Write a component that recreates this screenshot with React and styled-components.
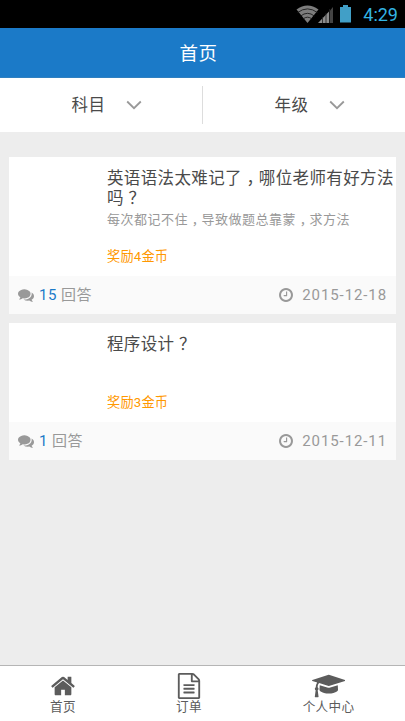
import React from "react";
import styled, { createGlobalStyle } from "styled-components";

const GlobalStyle = createGlobalStyle`
  * { box-sizing: border-box; }
  body {
    margin: 0;
    background: #ededed;
    font-family: Roboto, "Noto Sans CJK SC", sans-serif;
  }
`;

const Screen = styled.div`
  display: flex;
  flex-direction: column;
  width: 405px;
  height: 721px;
  overflow: hidden;
  background: #ededed;
`;

const StatusBar = styled.div`
  display: flex;
  flex: none;
  align-items: center;
  justify-content: flex-end;
  height: 28px;
  padding-right: 7px;
  background: #000;
`;

const StatusIcons = styled.svg`
  display: block;
  width: 56px;
  height: 28px;
  margin-right: 11px;
`;

const Clock = styled.span`
  color: #33b5e5;
  font-size: 18px;
  line-height: 28px;
  padding-top: 2px;
`;

const TitleBar = styled.header`
  flex: none;
  height: 50px;
  padding: 1px 8px 0 0;
  background: #1b7ac8;
  border-bottom: 1px solid #3080c0;
  color: #fff;
  font-size: 18.5px;
  line-height: 50px;
  letter-spacing: 0.5px;
  text-align: center;
`;

const Filters = styled.div`
  display: grid;
  flex: none;
  grid-template-columns: 203px 202px;
  align-items: center;
  height: 54px;
  background: #fff;
`;

const Filter = styled.div`
  display: flex;
  align-items: center;
  height: 38px;
  padding: 0 0 2px 71.5px;
  border-right: ${(p) => (p.$divided ? "1px solid #ddd" : "none")};
  color: #4a4a4a;
  font-size: 16.5px;
  letter-spacing: 0.4px;
`;

const Chevron = styled.svg`
  width: 16px;
  height: 10px;
  margin: 2px 0 0 20.5px;
  fill: none;
  stroke: #999;
  stroke-width: 1.8;
`;

const List = styled.main`
  display: flex;
  flex: 1;
  flex-direction: column;
  gap: 9px;
  padding: 24.5px 9px 0;
`;

const Card = styled.article`
  background: #fff;
`;

const CardBody = styled.div`
  display: flex;
  flex-direction: column;
  height: ${(p) => p.$height}px;
  padding: 12px 0 0 98px;
  white-space: nowrap;
`;

const Question = styled.h2`
  margin: 0;
  color: #4a4a4a;
  font-size: 16.5px;
  font-weight: 400;
  line-height: 20.5px;
  letter-spacing: 0.37px;
`;

const Detail = styled.p`
  margin: 0;
  color: #999;
  font-size: 13px;
  line-height: 20px;
  letter-spacing: 0.5px;
`;

/* Half-width punctuation, centred in a full-width cell. */
const Mark = styled.span`
  margin: 0 0.22em 0 0.28em;
  font-feature-settings: "halt";
`;

const Reward = styled.div`
  margin-top: auto;
  padding-bottom: 9px;
  color: #ff9800;
  font-size: 13.2px;
  line-height: 20px;
  letter-spacing: 0.2px;
`;

const CardFooter = styled.footer`
  display: flex;
  align-items: center;
  justify-content: space-between;
  height: 38px;
  padding: 0 9px;
  background: #fafafa;
  color: #999;
  font-size: 15px;
  letter-spacing: 0.9px;
`;

const Meta = styled.div`
  display: flex;
  align-items: center;
  gap: ${(p) => p.$gap}px;
`;

const Answers = styled.span`
  padding-bottom: 3px;
  letter-spacing: 0.45px;
`;

const Count = styled.span`
  color: #1b7ac8;
`;

const Icon = styled.svg`
  display: block;
  flex: none;
  width: ${(p) => p.$w}px;
  height: ${(p) => p.$h}px;
  fill: currentColor;
`;

const TabBar = styled.nav`
  display: grid;
  flex: none;
  grid-template-columns: 126px 126px 153px;
  height: 56px;
  background: #fff;
  border-top: 1px solid #b5b5b5;
`;

const Tab = styled.div`
  display: flex;
  flex-direction: column;
  align-items: center;
  color: #5c5c5c;
  font-size: 12.6px;
  line-height: 16px;
  letter-spacing: 0.3px;
`;

const TabIcon = styled.div`
  display: flex;
  align-items: center;
  justify-content: center;
  height: 40px;
  margin-bottom: -7px;
`;

const icons = {
  comments: {
    box: "0 0 1792 1792",
    d: "M1408 768q0 139-94 257t-256.5 186.5-353.5 68.5q-86 0-176-16-124 88-278 128-36 9-86 16h-3q-11 0-20.5-8t-11.5-21q-1-3-1-6.5t.5-6.5 2-6l2.5-5 3.5-5.5 4-5 4.5-5 4-4.5q5-6 23-25t26-29.5 22.5-29 25-38.5 20.5-44q-124-72-195-177t-71-224q0-139 94-257t256.5-186.5 353.5-68.5 353.5 68.5 256.5 186.5 94 257zm384 256q0 120-71 224.5t-195 176.5q10 24 20.5 44t25 38.5 22.5 29 26 29.5 23 25q1 1 4 4.5t4.5 5 4 5 3.5 5.5l2.5 5 2 6 .5 6.5-1 6.5q-3 14-13 22t-22 7q-50-7-86-16-154-40-278-128-90 16-176 16-271 0-472-132 58 4 88 4 161 0 309-45t264-129q125-92 192-212t67-254q0-77-23-152 129 71 204 178t75 230z",
  },
  clock: {
    box: "128 128 1536 1536",
    d: "M1024 544v448q0 14-9 23t-23 9h-320q-14 0-23-9t-9-23v-64q0-14 9-23t23-9h224v-352q0-14 9-23t23-9h64q14 0 23 9t9 23zm416 352q0-148-73-273t-198-198-273-73-273 73-198 198-73 273 73 273 198 198 273 73 273-73 198-198 73-273zm224 0q0 209-103 385.5t-279.5 279.5-385.5 103-385.5-103-279.5-279.5-103-385.5 103-385.5 279.5-279.5 385.5-103 385.5 103 279.5 279.5 103 385.5z",
  },
  home: {
    box: "0 0 1792 1792",
    d: "M1472 992v480q0 26-19 45t-45 19h-384v-384h-256v384h-384q-26 0-45-19t-19-45v-480q0-1 .5-3t.5-3l575-474 575 474q1 2 1 6zm223-69l-62 74q-8 9-21 11h-3q-13 0-21-7l-692-577-692 577q-12 8-24 7-13-2-21-11l-62-74q-8-10-7-23.5t11-21.5l719-599q32-26 76-26t76 26l244 204v-195q0-14 9-23t23-9h192q14 0 23 9t9 23v408l219 182q10 8 11 21.5t-7 23.5z",
  },
  file: {
    box: "0 0 1792 1792",
    d: "M1596 380q28 28 48 76t20 88v1152q0 40-28 68t-68 28h-1344q-40 0-68-28t-28-68v-1600q0-40 28-68t68-28h896q40 0 88 20t76 48zm-444-244v376h376q-10-29-22-41l-313-313q-12-12-41-22zm384 1528v-1024h-416q-40 0-68-28t-28-68v-416h-768v1536h1280zm-1024-864q0-14 9-23t23-9h704q14 0 23 9t9 23v64q0 14-9 23t-23 9h-704q-14 0-23-9t-9-23v-64zm736 224q14 0 23 9t9 23v64q0 14-9 23t-23 9h-704q-14 0-23-9t-9-23v-64q0-14 9-23t23-9h704zm0 256q14 0 23 9t9 23v64q0 14-9 23t-23 9h-704q-14 0-23-9t-9-23v-64q0-14 9-23t23-9h704z",
  },
  cap: {
    box: "0 0 2304 1792",
    d: "M1774 836l18 316q4 69-82 128t-235 93.5-323 34.5-323-34.5-235-93.5-82-128l18-316 574 181q22 7 48 7t48-7zm530-324q0 23-22 31l-1120 352q-4 1-10 1t-10-1l-652-206q-43 34-71 111.5t-34 178.5q63 36 63 109 0 69-58 107l58 433q2 14-8 25-9 11-24 11h-192q-15 0-24-11-10-11-8-25l58-433q-58-38-58-107 0-73 65-111 11-207 98-330l-333-104q-22-8-22-31t22-31l1120-352q4-1 10-1t10 1l1120 352q22 8 22 31z",
  },
};

function Glyph({ name, w, h }) {
  return (
    <Icon viewBox={icons[name].box} $w={w} $h={h}>
      <path d={icons[name].d} />
    </Icon>
  );
}

function Spaced({ text }) {
  return text
    .split(/([，？])/)
    .map((part, i) => (i % 2 === 1 ? <Mark key={i}>{part}</Mark> : part));
}

const questions = [
  {
    lines: ["英语语法太难记了，哪位老师有好方法", "吗？"],
    detail: "每次都记不住，导致做题总靠蒙，求方法",
    reward: "奖励4金币",
    answers: 15,
    date: "2015-12-18",
    height: 119.5,
  },
  {
    lines: ["程序设计？"],
    reward: "奖励3金币",
    answers: 1,
    date: "2015-12-11",
    height: 99,
  },
];

const tabs = [
  { label: "首页", icon: "home", w: 26, h: 26 },
  { label: "订单", icon: "file", w: 26, h: 26 },
  { label: "个人中心", icon: "cap", w: 33.5, h: 26 },
];

function QuestionCard({ item }) {
  return (
    <Card>
      <CardBody $height={item.height}>
        <Question>
          {item.lines.map((line) => (
            <div key={line}>
              <Spaced text={line} />
            </div>
          ))}
        </Question>
        {item.detail && (
          <Detail>
            <Spaced text={item.detail} />
          </Detail>
        )}
        <Reward>{item.reward}</Reward>
      </CardBody>
      <CardFooter>
        <Meta $gap={5}>
          <Glyph name="comments" w={16} h={16} />
          <Answers>
            <Count>{item.answers}</Count> 回答
          </Answers>
        </Meta>
        <Meta $gap={9}>
          <Glyph name="clock" w={14} h={14} />
          <span>{item.date}</span>
        </Meta>
      </CardFooter>
    </Card>
  );
}

export default function App() {
  return (
    <Screen>
      <GlobalStyle />
      <StatusBar>
        <StatusIcons viewBox="0 0 56 28">
          <path d="M0.5 9.5Q11.5 1.5 22.5 9.5L11.5 23Z" fill="#7d7d7d" />
          <g fill="none" stroke="#1c1c1c" strokeWidth="0.9">
            <path d="M1.5 12.6Q11.5 5.2 21.5 12.6" />
            <path d="M4.5 16.1Q11.5 10.5 18.5 16.1" />
            <path d="M7 19Q11.5 15.4 16 19" />
          </g>
          <path d="M22 23L33 11.5V23Z" fill="#8c8c8c" />
          <path d="M34 10.5L37 7V23H34Z" fill="#444" />
          <path d="M26.5 17V23M30 13V23M33.5 9V23" stroke="#222" strokeWidth="0.8" />
          <path d="M44 7H47V5H52V7H55V22.5H44Z" fill="#419fc7" />
        </StatusIcons>
        <Clock>4:29</Clock>
      </StatusBar>
      <TitleBar>首页</TitleBar>
      <Filters>
        {["科目", "年级"].map((label, i) => (
          <Filter key={label} $divided={i === 0}>
            {label}
            <Chevron viewBox="0 0 16 10">
              <path d="M1.2 1.5L8 8.2L14.8 1.5" />
            </Chevron>
          </Filter>
        ))}
      </Filters>
      <List>
        {questions.map((item) => (
          <QuestionCard key={item.date} item={item} />
        ))}
      </List>
      <TabBar>
        {tabs.map((tab) => (
          <Tab key={tab.label}>
            <TabIcon>
              <Glyph name={tab.icon} w={tab.w} h={tab.h} />
            </TabIcon>
            {tab.label}
          </Tab>
        ))}
      </TabBar>
    </Screen>
  );
}
